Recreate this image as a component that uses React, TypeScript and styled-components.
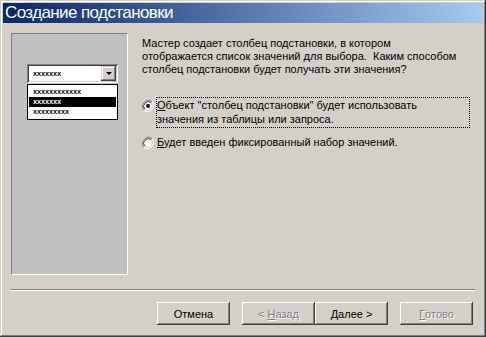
import styled, { createGlobalStyle } from "styled-components";

const GlobalStyle = createGlobalStyle`
  html, body {
    margin: 0;
    padding: 0;
    background: #d4d0c8;
  }
  body {
    font-family: "Liberation Sans", Arial, sans-serif;
    font-size: 11px;
    color: #000;
  }
`;

const Window = styled.div`
  width: 486px;
  height: 337px;
  box-sizing: border-box;
  background: #d4d0c8;
  padding: 3px;
  box-shadow: inset -1px -1px #404040, inset 1px 1px #d4d0c8,
    inset -2px -2px #808080, inset 2px 2px #ffffff;
  display: flex;
  flex-direction: column;
`;

const TitleBar = styled.div`
  height: 20px;
  background: linear-gradient(to right, #0a246a, #a6caf0);
  color: #fff;
  font-size: 17px;
  letter-spacing: -0.6px;
  line-height: 20px;
  padding-left: 2px;
  white-space: nowrap;
  overflow: hidden;
`;

const Body = styled.div`
  display: flex;
  padding: 10px 0 0 8px;
`;

const Picture = styled.div`
  width: 117px;
  height: 242px;
  box-sizing: border-box;
  background: #c0c0c0;
  border: 1px solid;
  border-color: #808080 #ffffff #ffffff #808080;
  padding: 30px 0 0 15px;
`;

const Combo = styled.div`
  width: 91px;
  height: 19px;
  box-sizing: border-box;
  background: #fff;
  display: flex;
  align-items: center;
  justify-content: space-between;
  padding: 2px;
  box-shadow: inset 1px 1px #808080, inset -1px -1px #ffffff,
    inset 2px 2px #404040, inset -2px -2px #d4d0c8;
`;

const DropButton = styled.div`
  width: 15px;
  height: 15px;
  box-sizing: border-box;
  background: #d4d0c8;
  display: flex;
  align-items: center;
  justify-content: center;
  box-shadow: inset -1px -1px #404040, inset 1px 1px #d4d0c8,
    inset -2px -2px #808080, inset 2px 2px #ffffff;
`;

const Arrow = styled.div`
  width: 0;
  height: 0;
  border-left: 3px solid transparent;
  border-right: 3px solid transparent;
  border-top: 3px solid #000;
`;

const DropList = styled.div`
  width: 91px;
  box-sizing: border-box;
  margin-top: 1px;
  background: #fff;
  border: 1px solid #000;
  padding: 2px 1px;
`;

const Dummy = styled.div<{ $selected?: boolean }>`
  height: 10px;
  padding-left: 4px;
  background: ${(p) => (p.$selected ? "#000" : "transparent")};
  color: ${(p) => (p.$selected ? "#fff" : "#000")};
  font-family: "Liberation Mono", monospace;
  font-size: 7px;
  font-weight: bold;
  line-height: 10px;
  letter-spacing: -0.2px;
`;

const ComboText = styled(Dummy)`
  padding-left: 4px;
  flex: 1;
`;

const Right = styled.div`
  margin-left: 14px;
  display: flex;
  flex-direction: column;
  width: 328px;
`;

const Prompt = styled.p`
  margin: 4px 0 0;
  width: 320px;
  line-height: 13px;
`;

const Options = styled.div`
  margin-top: 21px;
  display: flex;
  flex-direction: column;
  gap: 6px;
`;

const Option = styled.div`
  display: flex;
  align-items: flex-start;
  gap: 2px;
`;

const OptionText = styled.span<{ $focused?: boolean }>`
  flex: 1;
  padding: 1px 2px 2px 1px;
  line-height: 14px;
  outline: ${(p) => (p.$focused ? "1px dotted #000" : "none")};
  outline-offset: -1px;
`;

const Radio = styled.svg`
  flex: none;
  margin-top: 3px;
`;

const Separator = styled.div`
  margin: 14px 8px 0 8px;
  height: 0;
  border-top: 1px solid #808080;
  border-bottom: 1px solid #ffffff;
`;

const Buttons = styled.div`
  display: flex;
  justify-content: flex-end;
  margin: 11px 10px 0 0;
`;

const Button = styled.div<{ $disabled?: boolean; $gap?: number }>`
  width: 73px;
  height: 23px;
  box-sizing: border-box;
  margin-left: ${(p) => p.$gap ?? 0}px;
  display: flex;
  align-items: center;
  justify-content: center;
  color: ${(p) => (p.$disabled ? "#808080" : "#000")};
  text-shadow: ${(p) => (p.$disabled ? "1px 1px #ffffff" : "none")};
  box-shadow: inset -1px -1px #404040, inset 1px 1px #ffffff,
    inset -2px -2px #808080, inset 2px 2px #d4d0c8;
`;

const U = styled.span`
  text-decoration: underline;
`;

function RadioIcon({ checked }: { checked?: boolean }) {
  return (
    <Radio width="12" height="12" viewBox="0 0 12 12">
      <path d="M10.2 1.8A6 6 0 0 0 1.8 10.2" fill="none" stroke="#808080" strokeWidth="1" />
      <path d="M1.8 10.2A6 6 0 0 0 10.2 1.8" fill="none" stroke="#ffffff" strokeWidth="1" />
      <circle cx="6" cy="6" r="4.6" fill="#fff" />
      <path d="M9.3 2.7A4.7 4.7 0 0 0 2.7 9.3" fill="none" stroke="#404040" strokeWidth="1" />
      <path d="M2.7 9.3A4.7 4.7 0 0 0 9.3 2.7" fill="none" stroke="#d4d0c8" strokeWidth="1" />
      {checked && <circle cx="6" cy="6" r="2" fill="#000" />}
    </Radio>
  );
}

export default function App() {
  return (
    <>
      <GlobalStyle />
      <Window>
        <TitleBar>Создание подстановки</TitleBar>
        <Body>
          <Picture>
            <Combo>
              <ComboText>xxxxxxx</ComboText>
              <DropButton>
                <Arrow />
              </DropButton>
            </Combo>
            <DropList>
              <Dummy>xxxxxxxxxxxx</Dummy>
              <Dummy $selected>xxxxxxx</Dummy>
              <Dummy>xxxxxxxxx</Dummy>
            </DropList>
          </Picture>
          <Right>
            <Prompt>
              Мастер создает столбец подстановки, в котором отображается список
              значений для выбора.&nbsp; Каким способом столбец подстановки
              будет получать эти значения?
            </Prompt>
            <Options>
              <Option>
                <RadioIcon checked />
                <OptionText $focused>
                  <U>О</U>бъект "столбец подстановки" будет использовать
                  <br />
                  значения из таблицы или запроса.
                </OptionText>
              </Option>
              <Option>
                <RadioIcon />
                <OptionText>
                  <U>Б</U>удет введен фиксированный набор значений.
                </OptionText>
              </Option>
            </Options>
          </Right>
        </Body>
        <Separator />
        <Buttons>
          <Button>Отмена</Button>
          <Button $disabled $gap={12}>
            &lt;&nbsp;<U>Н</U>азад
          </Button>
          <Button>
            <U>Д</U>алее&nbsp;&gt;
          </Button>
          <Button $disabled $gap={12}>
            <U>Г</U>отово
          </Button>
        </Buttons>
      </Window>
    </>
  );
}
